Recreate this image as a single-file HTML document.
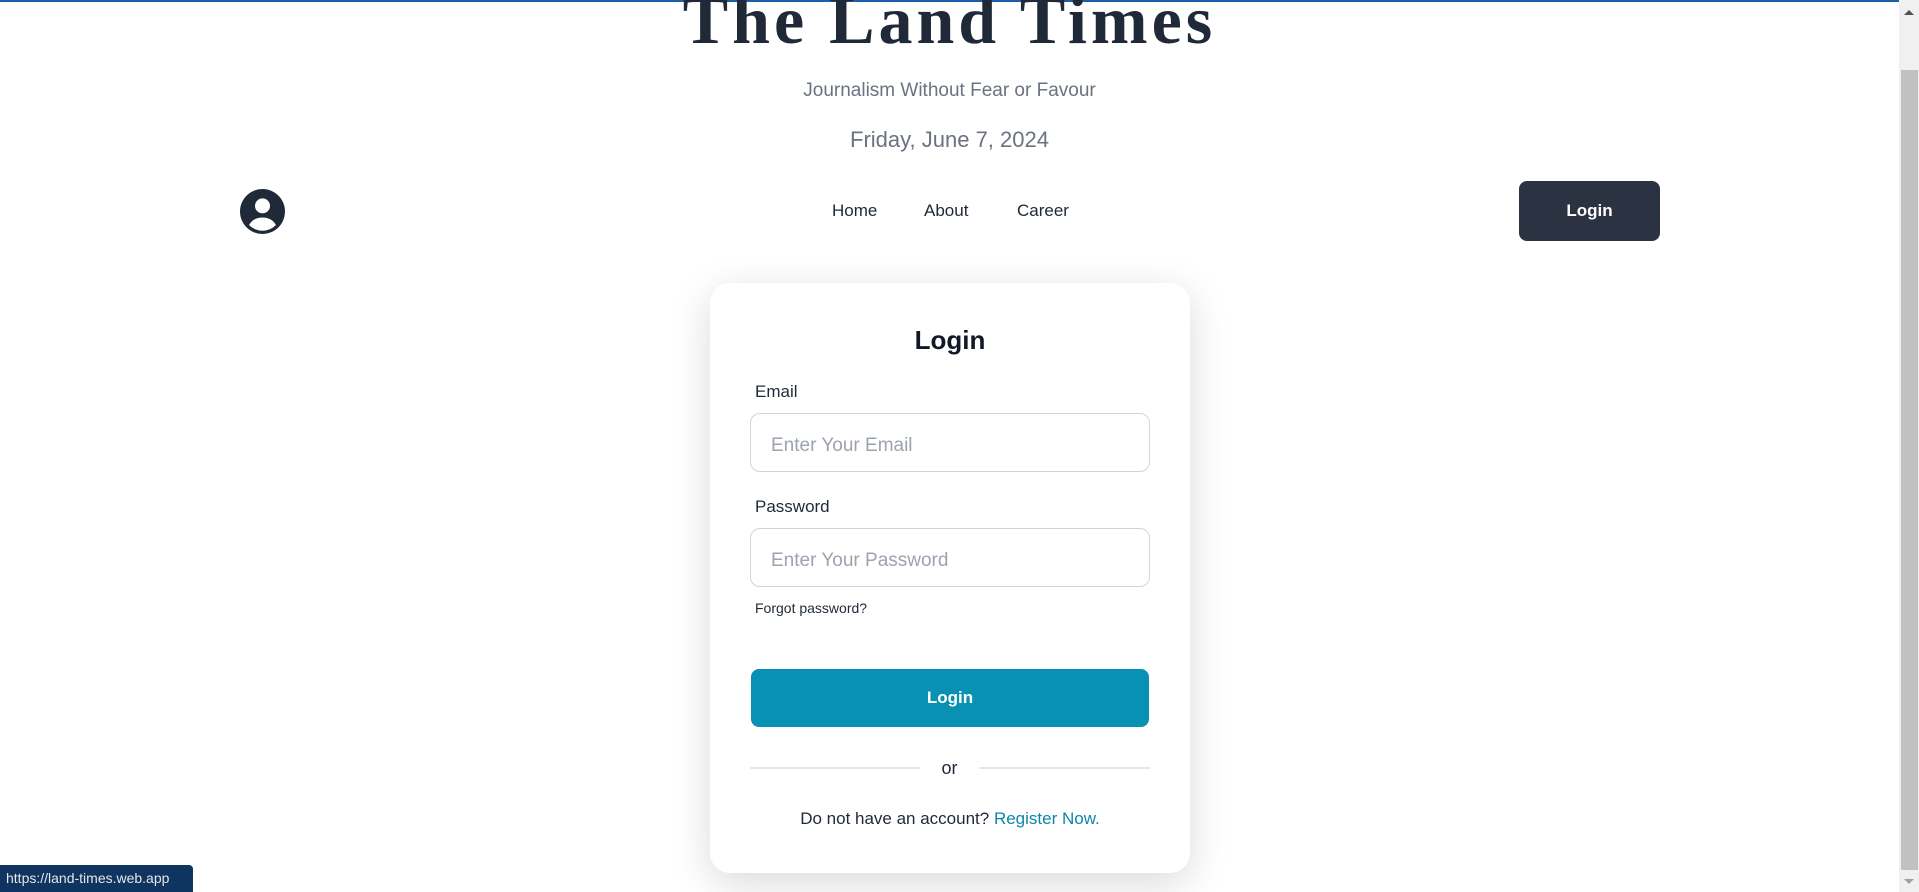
<!DOCTYPE html>
<html><head><meta charset="utf-8"><style>
*{box-sizing:border-box;margin:0;padding:0}
body{width:1919px;height:892px;overflow:hidden;background:#fff;font-family:"Liberation Sans",sans-serif;position:relative}
.a{position:absolute}
.topline{left:0;top:0;width:1899px;height:2px;background:#1a5fa8}
.title{left:0;width:1899px;text-align:center;top:-18px;font-family:"Liberation Serif",serif;font-weight:bold;font-size:68px;color:#1f2937;letter-spacing:4px;line-height:76px}
.c{left:0;width:1899px;text-align:center;color:#6b7280}
.nav{top:201px;font-size:17px;color:#1f2937}
.card{left:710px;top:283px;width:480px;height:590px;background:#fff;border-radius:20px;box-shadow:0 10px 40px rgba(0,0,0,0.15)}
.lbl{font-size:17px;color:#1f2937;left:755px}
.inp{left:750px;width:400px;height:59px;border:1.5px solid #d4d4d8;border-radius:10px;font-size:19px;color:#9ca3af;padding-left:20px;line-height:64px}
</style></head><body>
<div class="a topline"></div>
<div class="a title">The Land Times</div>
<div class="a c" style="top:80px;font-size:19px">Journalism Without Fear or Favour</div>
<div class="a c" style="top:127px;font-size:22px">Friday, June 7, 2024</div>
<svg class="a" style="left:240px;top:189px" width="45" height="45" viewBox="0 0 24 24"><circle cx="12" cy="12" r="12" fill="#1f2937"/><circle cx="12" cy="9" r="4" fill="#fff"/><path d="M4.8 19.2C6.5 16.3 9 15.2 12 15.2s5.5 1.1 7.2 4A10 10 0 0 1 4.8 19.2z" fill="#fff"/></svg>
<div class="a nav" style="left:832px">Home</div>
<div class="a nav" style="left:924px">About</div>
<div class="a nav" style="left:1017px">Career</div>
<div class="a" style="left:1519px;top:181px;width:141px;height:60px;background:#2b3241;border-radius:8px;color:#fff;font-weight:bold;font-size:17px;text-align:center;line-height:60px">Login</div>
<div class="a card"></div>
<div class="a" style="left:710px;width:480px;top:325px;text-align:center;font-size:26px;font-weight:bold;color:#111827">Login</div>
<div class="a lbl" style="top:382px">Email</div>
<div class="a inp" style="top:413px">Enter Your Email</div>
<div class="a lbl" style="top:497px">Password</div>
<div class="a inp" style="top:528px">Enter Your Password</div>
<div class="a" style="left:755px;top:600px;font-size:14px;color:#1f2937">Forgot password?</div>
<div class="a" style="left:751px;top:669px;width:398px;height:58px;background:#0891b2;border-radius:8px;color:#fff;font-weight:bold;font-size:17px;text-align:center;line-height:58px">Login</div>
<div class="a" style="left:750px;top:767px;width:170px;height:2px;background:#e5e7eb"></div>
<div class="a" style="left:979px;top:767px;width:171px;height:2px;background:#e5e7eb"></div>
<div class="a" style="left:920px;width:59px;top:758px;text-align:center;font-size:18px;color:#1f2937">or</div>
<div class="a" style="left:710px;width:480px;top:809px;text-align:center;font-size:17px;color:#1f2937">Do not have an account? <span style="color:#0e86a8">Register Now.</span></div>
<div class="a" style="left:1899px;top:0;width:20px;height:892px;background:#f0f0f0"></div>
<div class="a" style="left:1901px;top:70px;width:17px;height:800px;background:#c1c1c1"></div>
<div class="a" style="left:1904px;top:10px;width:0;height:0;border-left:5px solid transparent;border-right:5px solid transparent;border-bottom:5px solid #505050"></div>
<div class="a" style="left:1904px;top:879px;width:0;height:0;border-left:5px solid transparent;border-right:5px solid transparent;border-top:5px solid #a0a0a0"></div>
<div class="a" style="left:0;top:865px;width:193px;height:27px;background:#0f3460;border-top-right-radius:4px;color:#e5e7eb;font-size:14px;line-height:27px;padding-left:6px">https://land-times.web.app</div>
</body></html>
